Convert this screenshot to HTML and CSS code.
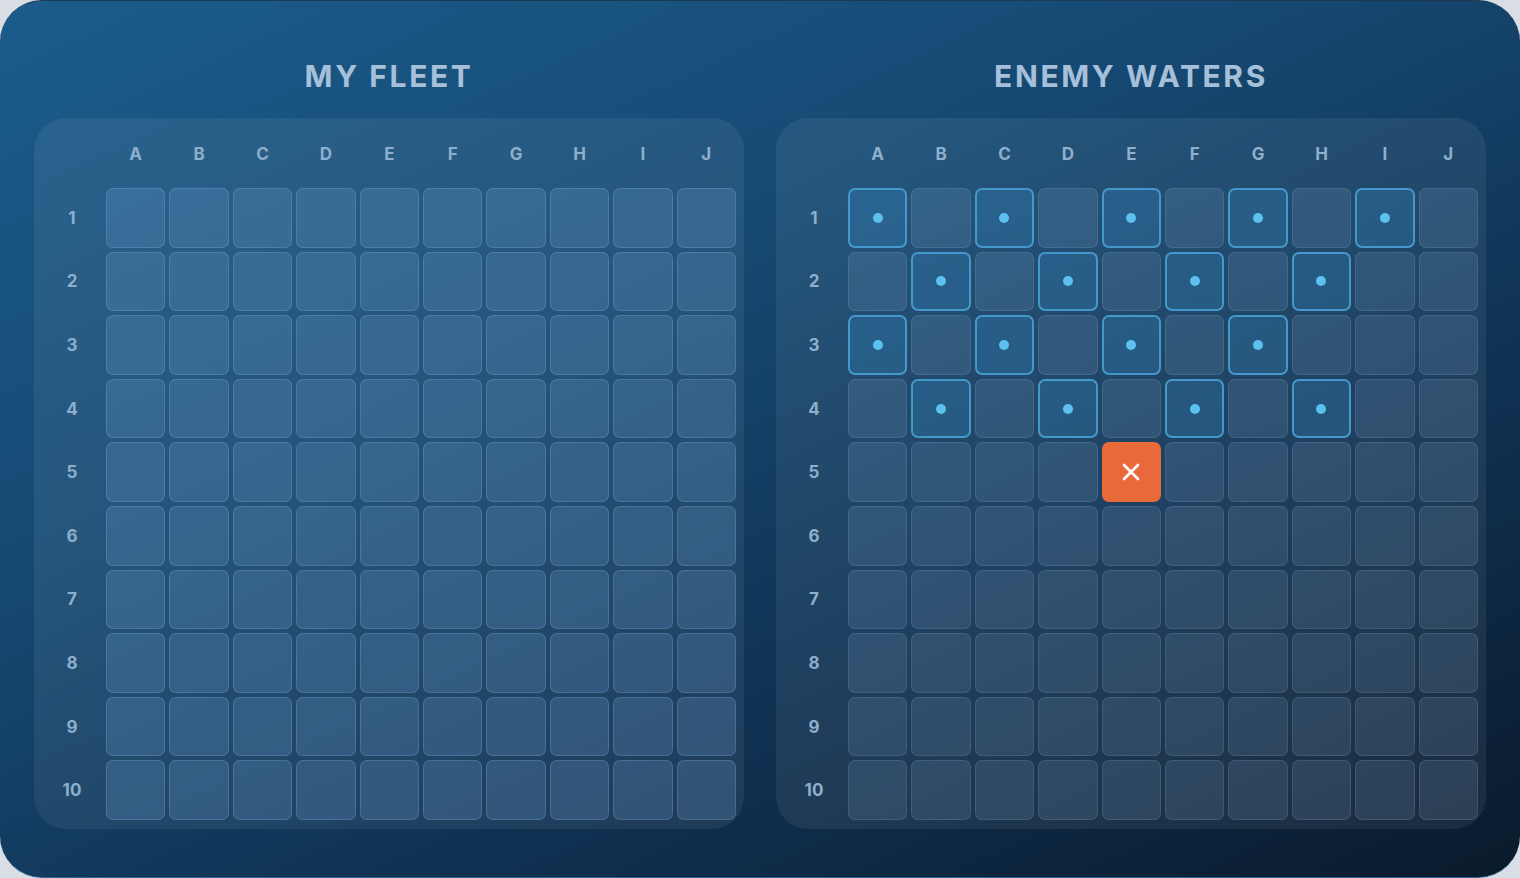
FILE: index.html
```html
<!DOCTYPE html>
<html lang="en">
<head>
  <meta charset="UTF-8" />
  <title>Battleship</title>
  <link rel="stylesheet" href="styles.css">
</head>
<body>
  <div class="game">
    <section class="side">
      <h2 class="side-title">MY FLEET</h2>
      <div class="board">
        <div class="corner"></div>
        <div class="col-label">A</div><div class="col-label">B</div><div class="col-label">C</div><div class="col-label">D</div><div class="col-label">E</div><div class="col-label">F</div><div class="col-label">G</div><div class="col-label">H</div><div class="col-label">I</div><div class="col-label">J</div>

        <div class="row-label">1</div>
        <div class="cell"></div><div class="cell"></div><div class="cell"></div><div class="cell"></div><div class="cell"></div><div class="cell"></div><div class="cell"></div><div class="cell"></div><div class="cell"></div><div class="cell"></div>
        <div class="row-label">2</div>
        <div class="cell"></div><div class="cell"></div><div class="cell"></div><div class="cell"></div><div class="cell"></div><div class="cell"></div><div class="cell"></div><div class="cell"></div><div class="cell"></div><div class="cell"></div>
        <div class="row-label">3</div>
        <div class="cell"></div><div class="cell"></div><div class="cell"></div><div class="cell"></div><div class="cell"></div><div class="cell"></div><div class="cell"></div><div class="cell"></div><div class="cell"></div><div class="cell"></div>
        <div class="row-label">4</div>
        <div class="cell"></div><div class="cell"></div><div class="cell"></div><div class="cell"></div><div class="cell"></div><div class="cell"></div><div class="cell"></div><div class="cell"></div><div class="cell"></div><div class="cell"></div>
        <div class="row-label">5</div>
        <div class="cell"></div><div class="cell"></div><div class="cell"></div><div class="cell"></div><div class="cell"></div><div class="cell"></div><div class="cell"></div><div class="cell"></div><div class="cell"></div><div class="cell"></div>
        <div class="row-label">6</div>
        <div class="cell"></div><div class="cell"></div><div class="cell"></div><div class="cell"></div><div class="cell"></div><div class="cell"></div><div class="cell"></div><div class="cell"></div><div class="cell"></div><div class="cell"></div>
        <div class="row-label">7</div>
        <div class="cell"></div><div class="cell"></div><div class="cell"></div><div class="cell"></div><div class="cell"></div><div class="cell"></div><div class="cell"></div><div class="cell"></div><div class="cell"></div><div class="cell"></div>
        <div class="row-label">8</div>
        <div class="cell"></div><div class="cell"></div><div class="cell"></div><div class="cell"></div><div class="cell"></div><div class="cell"></div><div class="cell"></div><div class="cell"></div><div class="cell"></div><div class="cell"></div>
        <div class="row-label">9</div>
        <div class="cell"></div><div class="cell"></div><div class="cell"></div><div class="cell"></div><div class="cell"></div><div class="cell"></div><div class="cell"></div><div class="cell"></div><div class="cell"></div><div class="cell"></div>
        <div class="row-label">10</div>
        <div class="cell"></div><div class="cell"></div><div class="cell"></div><div class="cell"></div><div class="cell"></div><div class="cell"></div><div class="cell"></div><div class="cell"></div><div class="cell"></div><div class="cell"></div>
      </div>
    </section>

    <section class="side">
      <h2 class="side-title">ENEMY WATERS</h2>
      <div class="board board-enemy">
        <div class="corner"></div>
        <div class="col-label">A</div><div class="col-label">B</div><div class="col-label">C</div><div class="col-label">D</div><div class="col-label">E</div><div class="col-label">F</div><div class="col-label">G</div><div class="col-label">H</div><div class="col-label">I</div><div class="col-label">J</div>

        <div class="row-label">1</div>
        <div class="cell miss"><span class="dot"></span></div><div class="cell"></div><div class="cell miss"><span class="dot"></span></div><div class="cell"></div><div class="cell miss"><span class="dot"></span></div><div class="cell"></div><div class="cell miss"><span class="dot"></span></div><div class="cell"></div><div class="cell miss"><span class="dot"></span></div><div class="cell"></div>
        <div class="row-label">2</div>
        <div class="cell"></div><div class="cell miss"><span class="dot"></span></div><div class="cell"></div><div class="cell miss"><span class="dot"></span></div><div class="cell"></div><div class="cell miss"><span class="dot"></span></div><div class="cell"></div><div class="cell miss"><span class="dot"></span></div><div class="cell"></div><div class="cell"></div>
        <div class="row-label">3</div>
        <div class="cell miss"><span class="dot"></span></div><div class="cell"></div><div class="cell miss"><span class="dot"></span></div><div class="cell"></div><div class="cell miss"><span class="dot"></span></div><div class="cell"></div><div class="cell miss"><span class="dot"></span></div><div class="cell"></div><div class="cell"></div><div class="cell"></div>
        <div class="row-label">4</div>
        <div class="cell"></div><div class="cell miss"><span class="dot"></span></div><div class="cell"></div><div class="cell miss"><span class="dot"></span></div><div class="cell"></div><div class="cell miss"><span class="dot"></span></div><div class="cell"></div><div class="cell miss"><span class="dot"></span></div><div class="cell"></div><div class="cell"></div>
        <div class="row-label">5</div>
        <div class="cell"></div><div class="cell"></div><div class="cell"></div><div class="cell"></div>
        <div class="cell hit">
          <svg width="18" height="18" viewBox="0 0 18 18"><path d="M2 2 L16 16 M16 2 L2 16" stroke="#fff" stroke-width="2.6" stroke-linecap="round"/></svg>
        </div>
        <div class="cell"></div><div class="cell"></div><div class="cell"></div><div class="cell"></div><div class="cell"></div>
        <div class="row-label">6</div>
        <div class="cell"></div><div class="cell"></div><div class="cell"></div><div class="cell"></div><div class="cell"></div><div class="cell"></div><div class="cell"></div><div class="cell"></div><div class="cell"></div><div class="cell"></div>
        <div class="row-label">7</div>
        <div class="cell"></div><div class="cell"></div><div class="cell"></div><div class="cell"></div><div class="cell"></div><div class="cell"></div><div class="cell"></div><div class="cell"></div><div class="cell"></div><div class="cell"></div>
        <div class="row-label">8</div>
        <div class="cell"></div><div class="cell"></div><div class="cell"></div><div class="cell"></div><div class="cell"></div><div class="cell"></div><div class="cell"></div><div class="cell"></div><div class="cell"></div><div class="cell"></div>
        <div class="row-label">9</div>
        <div class="cell"></div><div class="cell"></div><div class="cell"></div><div class="cell"></div><div class="cell"></div><div class="cell"></div><div class="cell"></div><div class="cell"></div><div class="cell"></div><div class="cell"></div>
        <div class="row-label">10</div>
        <div class="cell"></div><div class="cell"></div><div class="cell"></div><div class="cell"></div><div class="cell"></div><div class="cell"></div><div class="cell"></div><div class="cell"></div><div class="cell"></div><div class="cell"></div>
      </div>
    </section>
  </div>
</body>
</html>
```

FILE: styles.css
```css
/* Base */
*, *::before, *::after {
  box-sizing: border-box;
}
html, body {
  margin: 0;
  padding: 0;
  height: 100%;
}
body {
  background: #d9dee6;
  font-family: Inter, "Noto Sans", "DejaVu Sans", sans-serif;
  overflow: hidden;
}

/* Ocean panel */
.game {
  width: 1520px;
  height: 878px;
  border-radius: 42px;
  background: linear-gradient(155deg, #1b5c8b 0%, #164a74 35%, #0f3050 70%, #0a1a2b 100%);
  border-top: 1px solid #1d3851;
  border-bottom: 1px solid #2a6492;
  padding: 53px 34px 0;
  display: grid;
  grid-template-columns: 710px 710px;
  column-gap: 32px;
  align-items: start;
}
.side-title {
  margin: 0 0 20px;
  height: 44px;
  line-height: 44px;
  text-align: center;
  font-size: 30px;
  font-weight: 700;
  letter-spacing: 2.6px;
  color: #a6c0d9;
}

/* Board */
.board {
  background: rgba(255, 255, 255, 0.065);
  border-radius: 32px;
  padding: 8px 8px 9px;
  display: grid;
  grid-template-columns: 60px repeat(10, 1fr);
  grid-template-rows: 58px;
  grid-auto-rows: 59.6px;
  gap: 4px;
}
.col-label,
.row-label {
  display: flex;
  align-items: center;
  justify-content: center;
  font-size: 17px;
  font-weight: 700;
  color: #8eafcb;
}
.col-label {
  padding-bottom: 2px;
}
.cell {
  border-radius: 7px;
  background: rgba(120, 170, 220, 0.22);
  border: 1.5px solid rgba(150, 195, 240, 0.22);
  display: flex;
  align-items: center;
  justify-content: center;
}
.board-enemy .cell {
  background: rgba(160, 200, 240, 0.13);
  border-color: rgba(170, 205, 240, 0.14);
}
.board-enemy .cell.miss {
  background: rgba(60, 160, 225, 0.22);
  border: 2px solid #4598cb;
}
.dot {
  width: 10px;
  height: 10px;
  border-radius: 50%;
  background: #5cc1ef;
}
.board-enemy .cell.hit {
  background: #e8693a;
  border: none;
}
```
